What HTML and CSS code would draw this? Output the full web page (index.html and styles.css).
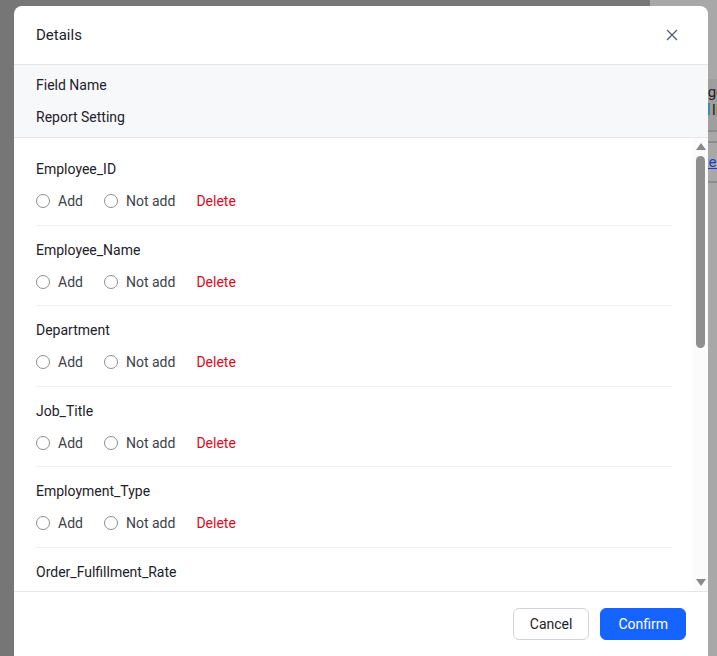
FILE: index.html
```html
<!DOCTYPE html>
<html>
  <head>
    <meta charset="utf-8" />
    <title>Details</title>
    <link rel="stylesheet" href="styles.css">
  </head>

  <body>
    <!-- 뒤쪽 페이지 (마스크 포함) -->
    <div class="page">
      <div class="page-main"></div>
      <div class="page-side">
        <div class="side-head">
          <p class="side-title">Manage</p>
          <p><span class="tag"></span>list</p>
        </div>
        <div class="side-row side-row-thin"></div>
        <div class="side-row"><a href="#">Linked</a></div>
      </div>
    </div>

    <!-- 모달 -->
    <div class="modal">
      <div class="modal-head">
        <h2>Details</h2>
        <button class="close" aria-label="close">
          <svg width="12" height="12" viewBox="0 0 12 12">
            <path d="M1 1L11 11M11 1L1 11" stroke="#5c6370" stroke-width="1.4" fill="none" />
          </svg>
        </button>
      </div>

      <div class="setting">
        <p>Field Name</p>
        <p>Report Setting</p>
      </div>

      <div class="modal-body">
        <ul class="fields">
          <li>
            <p class="name">Employee_ID</p>
            <div class="opts">
              <label><span class="radio"></span>Add</label>
              <label><span class="radio"></span>Not add</label>
              <a href="#" class="del">Delete</a>
            </div>
          </li>
          <li>
            <p class="name">Employee_Name</p>
            <div class="opts">
              <label><span class="radio"></span>Add</label>
              <label><span class="radio"></span>Not add</label>
              <a href="#" class="del">Delete</a>
            </div>
          </li>
          <li>
            <p class="name">Department</p>
            <div class="opts">
              <label><span class="radio"></span>Add</label>
              <label><span class="radio"></span>Not add</label>
              <a href="#" class="del">Delete</a>
            </div>
          </li>
          <li>
            <p class="name">Job_Title</p>
            <div class="opts">
              <label><span class="radio"></span>Add</label>
              <label><span class="radio"></span>Not add</label>
              <a href="#" class="del">Delete</a>
            </div>
          </li>
          <li>
            <p class="name">Employment_Type</p>
            <div class="opts">
              <label><span class="radio"></span>Add</label>
              <label><span class="radio"></span>Not add</label>
              <a href="#" class="del">Delete</a>
            </div>
          </li>
          <li>
            <p class="name">Order_Fulfillment_Rate</p>
          </li>
        </ul>

        <!-- 스크롤바 -->
        <div class="scrollbar">
          <span class="arrow">
            <svg width="10" height="7" viewBox="0 0 10 7"><path d="M5 0L10 7H0Z" fill="#898989" /></svg>
          </span>
          <div class="track">
            <div class="thumb"></div>
          </div>
          <span class="arrow">
            <svg width="10" height="7" viewBox="0 0 10 7"><path d="M0 0H10L5 7Z" fill="#898989" /></svg>
          </span>
        </div>
      </div>

      <div class="modal-foot">
        <button class="btn">Cancel</button>
        <button class="btn btn-primary">Confirm</button>
      </div>
    </div>
  </body>
</html>
```

FILE: styles.css
```css
* {
  box-sizing: border-box;
}

html,
body {
  margin: 0;
  height: 100%;
  overflow: hidden;
}

body {
  font-family: Roboto, "Liberation Sans", Arial, sans-serif;
  font-size: 14px;
  color: #1d2129;
}

p {
  margin: 0;
}

/* 뒤쪽 페이지 */
.page {
  display: flex;
  height: 100%;
}

.page-main {
  flex: 1;
  background: #767676;
}

.page-side {
  width: 67px;
  background: #a8a8a8;
  padding-top: 79px;
  font-size: 15px;
  color: #222;
}

.side-head {
  height: 53px;
  padding: 4px 0 0 58px;
  background: #9f9f9f;
  border-bottom: 2px solid #8d8d8d;
  line-height: 18px;
  white-space: nowrap;
}

.side-title {
  margin-left: -38px;
}

.tag {
  display: inline-block;
  width: 2px;
  height: 12px;
  margin-right: 2px;
  background: #3a8fa8;
}

.side-row {
  height: 40px;
  border-bottom: 2px solid #8d8d8d;
  padding: 10px 0 0 31px;
  white-space: nowrap;
}

.side-row-thin {
  height: 11px;
  padding: 0;
}

.side-row a {
  color: #1a3fc8;
}

/* 모달 */
.modal {
  position: fixed;
  left: 14px;
  top: 6px;
  width: 694px;
  height: 670px;
  display: flex;
  flex-direction: column;
  background: #fff;
  border-radius: 8px;
}

.modal-head {
  display: flex;
  align-items: center;
  justify-content: space-between;
  height: 59px;
  padding: 0 30px 0 22px;
  border-bottom: 1px solid #e5e6eb;
}

.modal-head h2 {
  margin: 0;
  font-size: 15px;
  font-weight: 400;
}

.close {
  display: flex;
  padding: 0;
  border: 0;
  background: none;
}

.setting {
  display: flex;
  flex-direction: column;
  gap: 10px;
  padding: 9px 22px;
  background: #f7f8fa;
  border-bottom: 1px solid #e5e6eb;
  line-height: 22px;
}

/* 필드 목록 */
.modal-body {
  display: flex;
  height: 453px;
}

.fields {
  flex: 1;
  margin: 0;
  padding: 7px 21px 0 22px;
  list-style: none;
  overflow: hidden;
}

.fields li {
  padding: 13px 0 11.5px;
  border-bottom: 1px solid #f0f1f3;
}

.name {
  line-height: 22px;
  margin-bottom: 9px;
}

.opts {
  display: flex;
  align-items: center;
  height: 24px;
}

.opts label {
  display: flex;
  align-items: center;
  gap: 8px;
  margin-right: 21px;
  color: #3d424a;
}

.radio {
  width: 14px;
  height: 14px;
  border: 1px solid #8c8f94;
  border-radius: 50%;
}

.del {
  color: #dd0a1e;
  text-decoration: none;
}

/* 스크롤바 */
.scrollbar {
  display: flex;
  flex-direction: column;
  width: 15px;
  background: #fbfbfb;
}

.arrow {
  display: flex;
  align-items: center;
  justify-content: center;
  height: 17px;
}

.track {
  flex: 1;
  padding: 1px 3px 0;
}

.thumb {
  height: 192px;
  background: #8f8f8f;
  border-radius: 5px;
}

/* 하단 버튼 */
.modal-foot {
  display: flex;
  justify-content: flex-end;
  gap: 11px;
  padding: 16px 22px;
  border-top: 1px solid #e5e6eb;
}

.btn {
  height: 32px;
  padding: 0 16px;
  font-family: inherit;
  font-size: 14px;
  color: #1d2129;
  background: #fff;
  border: 1px solid #d0d3d9;
  border-radius: 6px;
}

.btn-primary {
  padding: 0 17px;
  color: #fff;
  background: #1664ff;
  border-color: #1664ff;
}
```
